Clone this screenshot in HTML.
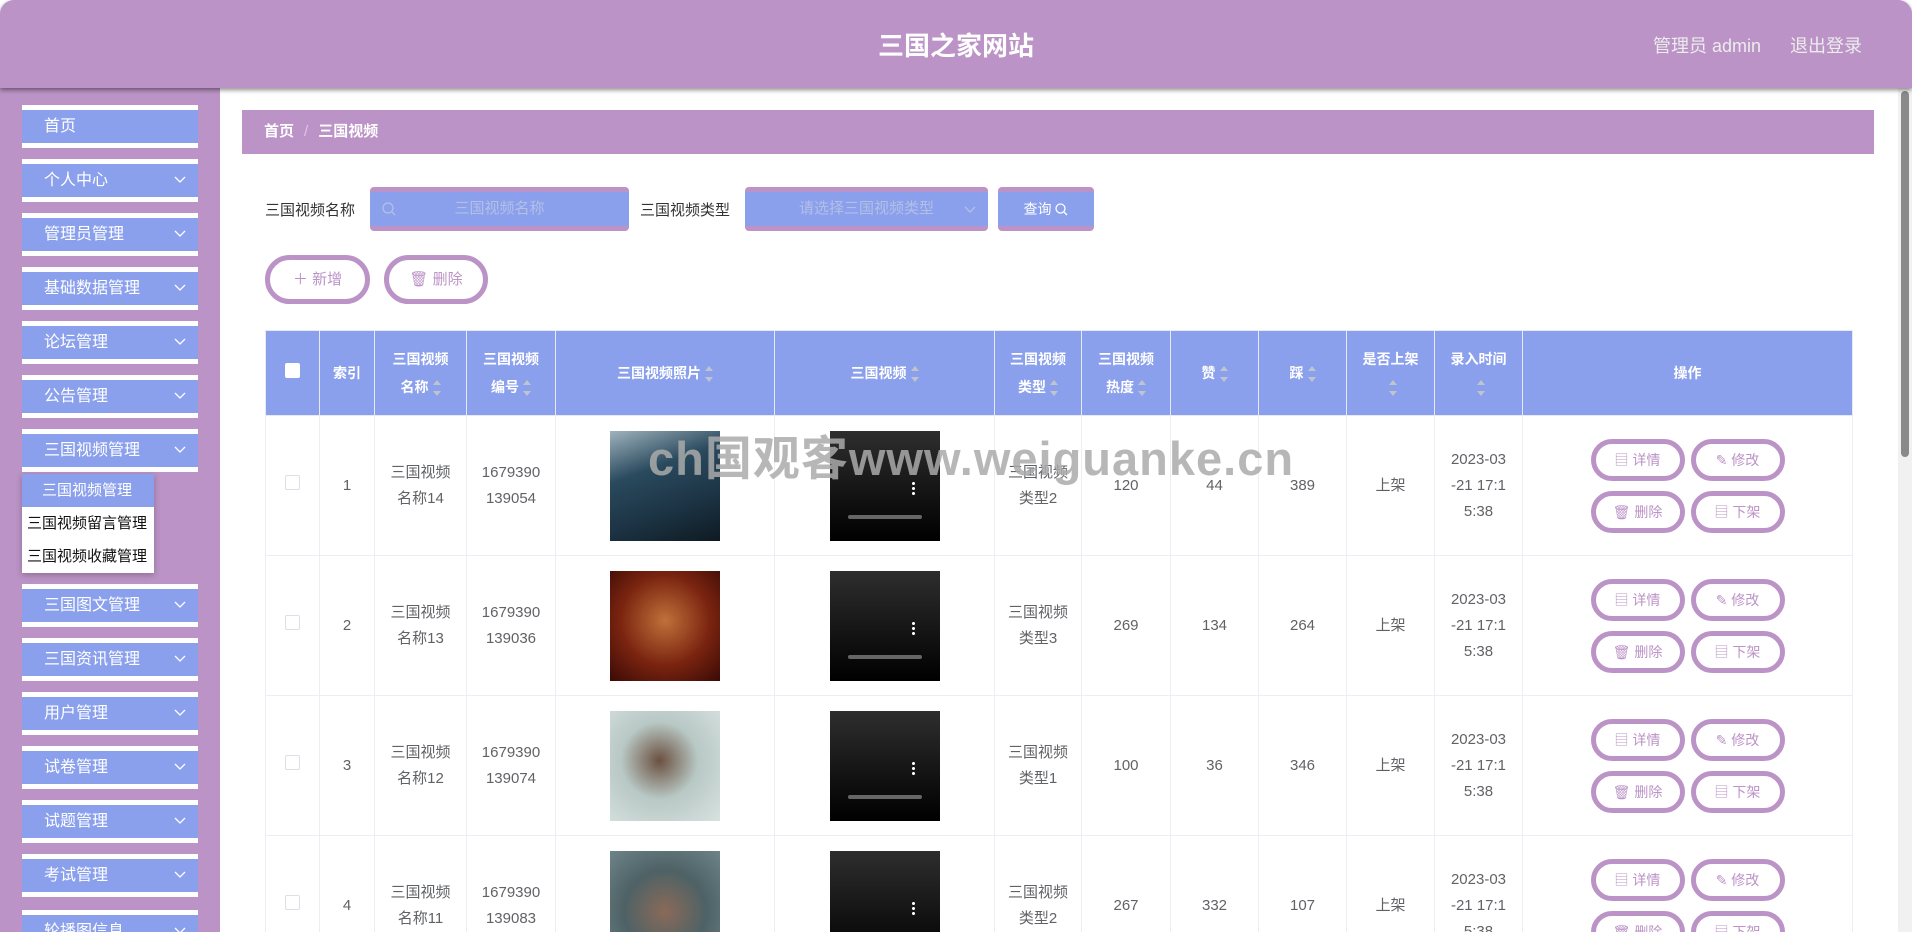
<!DOCTYPE html>
<html><head><meta charset="utf-8"><style>
*{box-sizing:border-box;margin:0;padding:0}
html,body{width:1912px;height:932px;overflow:hidden;background:#fff}
body{font-family:"Liberation Sans","Noto Sans CJK SC",sans-serif}
#w{position:relative;width:1912px;height:932px;overflow:hidden}
.hdr{position:absolute;left:0;top:0;width:1912px;height:88px;background:#bb93c6;border-radius:14px 14px 0 0;box-shadow:0 2px 5px rgba(0,0,0,.45);z-index:3}
.hdr .t{position:absolute;left:0;right:0;top:26px;text-align:center;color:#fff;font-size:26px;font-weight:bold}
.hdr .r{position:absolute;top:32px;color:#ececec;font-size:18px}
.side{position:absolute;left:0;top:88px;width:220px;height:844px;background:#bb93c6}
.mi{position:absolute;left:22px;width:176px;height:43px;background:#8ba0ec;border-top:5px solid #fff;border-bottom:5px solid #fff;color:#fff;font-size:16px;line-height:33px;padding-left:22px}
.mi svg{position:absolute;right:12px;top:12px}
.sub{position:absolute;left:22px;top:474px;width:132px;height:99px;background:#fff;box-shadow:0 2px 6px rgba(0,0,0,.25);font-size:15px}
.sub div{height:33px;line-height:33px;padding-left:5px;color:#111}
.sub div:first-child{background:#8ba0ec;color:#fff;padding-left:20px}
.bc{position:absolute;left:242px;top:110px;width:1632px;height:44px;background:#bb93c6;color:#fff;font-size:15px;font-weight:bold;line-height:44px;padding-left:22px}
.bc span{color:#ddc8e3;margin:0 10px;font-weight:normal}
.lbl{position:absolute;top:199px;font-size:15px;color:#333}
.inp{position:absolute;top:187px;height:44px;background:#8ba0ec;border-top:5px solid #bb93c6;border-bottom:5px solid #bb93c6;border-radius:4px;color:#b4bfe6;font-size:15px;line-height:34px;text-align:center}
.pill{position:absolute;height:49px;border:5px solid #bb93c6;border-radius:25px;background:#fff;color:#bb93c6;font-size:15px;line-height:39px;text-align:center}
table{position:absolute;left:265px;top:330px;border-collapse:collapse;table-layout:fixed;width:1587px}
th{background:#8ba0ec;color:#fff;font-size:14px;font-weight:bold;height:85px;border:1px solid #e8eaf3;line-height:28px;text-align:center}
td{height:140px;border:1px solid #ebeef5;text-align:center;color:#606266;font-size:15px;line-height:26px}
.ar{display:inline-block;vertical-align:middle;width:8px;height:16px;position:relative;margin-left:4px}
.ar:before,.ar:after{content:"";position:absolute;left:0;border-left:4px solid transparent;border-right:4px solid transparent}
.ar:before{top:0;border-bottom:5px solid #c0c4cc}.ar:after{bottom:0;border-top:5px solid #c0c4cc}
.cb{display:inline-block;width:15px;height:15px;border:1px solid #dcdfe6;border-radius:2px;background:#fff}
.img{width:110px;height:110px;margin:auto}
.vid{width:110px;height:110px;margin:auto;background:linear-gradient(#2e2e2e,#000);position:relative}
.vid i{position:absolute;left:18px;right:18px;bottom:22px;height:4px;border-radius:2px;background:#666}
.vid b{position:absolute;right:25px;top:50px;width:3px;height:14px;background:radial-gradient(circle,#fff 1.4px,transparent 1.6px) 0 0/3px 5px}
.ob{display:inline-block;width:94px;height:42px;border:5px solid #bb93c6;border-radius:21px;color:#bb93c6;font-size:14px;line-height:32px;margin:5px 3px}
.wm{position:absolute;left:648px;top:420px;font-size:47px;font-weight:bold;color:rgba(170,170,170,.85);letter-spacing:1px;z-index:2}
.sb{position:absolute;right:0;top:88px;width:14px;height:844px;background:#f1f1f1}
.sb i{position:absolute;left:3px;top:3px;width:8px;height:366px;background:#8a8a8a;border-radius:4px}
</style></head><body><div id="w">
<div class="hdr"><div class="t">三国之家网站</div><div class="r" style="left:1653px">管理员 admin</div><div class="r" style="left:1790px">退出登录</div></div>
<div class="side"></div>
<div class="mi" style="top:105px">首页</div>
<div class="mi" style="top:159px">个人中心<svg width="12" height="8"><path d="M1 1l5 5 5-5" stroke="#fff" fill="none" stroke-width="1.3"/></svg></div>
<div class="mi" style="top:213px">管理员管理<svg width="12" height="8"><path d="M1 1l5 5 5-5" stroke="#fff" fill="none" stroke-width="1.3"/></svg></div>
<div class="mi" style="top:267px">基础数据管理<svg width="12" height="8"><path d="M1 1l5 5 5-5" stroke="#fff" fill="none" stroke-width="1.3"/></svg></div>
<div class="mi" style="top:321px">论坛管理<svg width="12" height="8"><path d="M1 1l5 5 5-5" stroke="#fff" fill="none" stroke-width="1.3"/></svg></div>
<div class="mi" style="top:375px">公告管理<svg width="12" height="8"><path d="M1 1l5 5 5-5" stroke="#fff" fill="none" stroke-width="1.3"/></svg></div>
<div class="mi" style="top:429px">三国视频管理<svg width="12" height="8"><path d="M1 1l5 5 5-5" stroke="#fff" fill="none" stroke-width="1.3"/></svg></div>
<div class="sub"><div>三国视频管理</div><div>三国视频留言管理</div><div>三国视频收藏管理</div></div>
<div class="mi" style="top:584px">三国图文管理<svg width="12" height="8"><path d="M1 1l5 5 5-5" stroke="#fff" fill="none" stroke-width="1.3"/></svg></div>
<div class="mi" style="top:638px">三国资讯管理<svg width="12" height="8"><path d="M1 1l5 5 5-5" stroke="#fff" fill="none" stroke-width="1.3"/></svg></div>
<div class="mi" style="top:692px">用户管理<svg width="12" height="8"><path d="M1 1l5 5 5-5" stroke="#fff" fill="none" stroke-width="1.3"/></svg></div>
<div class="mi" style="top:746px">试卷管理<svg width="12" height="8"><path d="M1 1l5 5 5-5" stroke="#fff" fill="none" stroke-width="1.3"/></svg></div>
<div class="mi" style="top:800px">试题管理<svg width="12" height="8"><path d="M1 1l5 5 5-5" stroke="#fff" fill="none" stroke-width="1.3"/></svg></div>
<div class="mi" style="top:854px">考试管理<svg width="12" height="8"><path d="M1 1l5 5 5-5" stroke="#fff" fill="none" stroke-width="1.3"/></svg></div>
<div class="mi" style="top:910px">轮播图信息<svg width="12" height="8"><path d="M1 1l5 5 5-5" stroke="#fff" fill="none" stroke-width="1.3"/></svg></div>

<div class="bc">首页<span>/</span>三国视频</div>
<div class="lbl" style="left:265px">三国视频名称</div>
<div class="inp" style="left:370px;width:259px"><svg style="position:absolute;left:12px;top:10px" width="14" height="14"><circle cx="6" cy="6" r="5" stroke="#b4bfe6" fill="none" stroke-width="1.3"/><path d="M10 10l3 3" stroke="#b4bfe6" stroke-width="1.3"/></svg>三国视频名称</div>
<div class="lbl" style="left:640px">三国视频类型</div>
<div class="inp" style="left:745px;width:243px">请选择三国视频类型<svg style="position:absolute;right:12px;top:14px" width="12" height="8"><path d="M1 1l5 5 5-5" stroke="#b4bfe6" fill="none" stroke-width="1.3"/></svg></div>
<div class="inp" style="left:998px;width:96px;color:#fff;font-size:14px">查询 <svg width="13" height="13" style="vertical-align:-2px"><circle cx="5.5" cy="5.5" r="4.5" stroke="#fff" fill="none" stroke-width="1.3"/><path d="M9 9l3 3" stroke="#fff" stroke-width="1.3"/></svg></div>
<div class="pill" style="left:265px;top:255px;width:105px">＋ 新增</div>
<div class="pill" style="left:384px;top:255px;width:104px">🗑 删除</div>

<table>
<colgroup><col style="width:54px"><col style="width:55px"><col style="width:92px"><col style="width:89px"><col style="width:219px"><col style="width:220px"><col style="width:87px"><col style="width:89px"><col style="width:88px"><col style="width:88px"><col style="width:88px"><col style="width:88px"><col style="width:330px"></colgroup>
<tr><th><span class="cb" style="border:none"></span></th><th>索引</th><th>三国视频<br>名称<span class="ar"></span></th><th>三国视频<br>编号<span class="ar"></span></th><th>三国视频照片<span class="ar"></span></th><th>三国视频<span class="ar"></span></th><th>三国视频<br>类型<span class="ar"></span></th><th>三国视频<br>热度<span class="ar"></span></th><th>赞<span class="ar"></span></th><th>踩<span class="ar"></span></th><th>是否上架<br><span class="ar"></span></th><th>录入时间<br><span class="ar"></span></th><th>操作</th></tr>
<tr><td><span class="cb"></span></td><td>1</td><td>三国视频<br>名称14</td><td>1679390<br>139054</td><td><div class="img" style="background:linear-gradient(160deg,#9fb3bd,#2a4a5e 35%,#1b3242 70%,#0e1a22)"></div></td><td><div class="vid"><b></b><i></i></div></td><td>三国视频<br>类型2</td><td>120</td><td>44</td><td>389</td><td>上架</td><td>2023-03<br>-21 17:1<br>5:38</td><td><span class="ob">▤ 详情</span><span class="ob">✎ 修改</span><br><span class="ob">🗑 删除</span><span class="ob">▤ 下架</span></td></tr>
<tr><td><span class="cb"></span></td><td>2</td><td>三国视频<br>名称13</td><td>1679390<br>139036</td><td><div class="img" style="background:radial-gradient(circle at 50% 45%,#c0703a,#7a2410 55%,#3a0a05)"></div></td><td><div class="vid"><b></b><i></i></div></td><td>三国视频<br>类型3</td><td>269</td><td>134</td><td>264</td><td>上架</td><td>2023-03<br>-21 17:1<br>5:38</td><td><span class="ob">▤ 详情</span><span class="ob">✎ 修改</span><br><span class="ob">🗑 删除</span><span class="ob">▤ 下架</span></td></tr>
<tr><td><span class="cb"></span></td><td>3</td><td>三国视频<br>名称12</td><td>1679390<br>139074</td><td><div class="img" style="background:radial-gradient(circle at 45% 45%,#6b5040,#b8c8c4 45%,#d8e2e0)"></div></td><td><div class="vid"><b></b><i></i></div></td><td>三国视频<br>类型1</td><td>100</td><td>36</td><td>346</td><td>上架</td><td>2023-03<br>-21 17:1<br>5:38</td><td><span class="ob">▤ 详情</span><span class="ob">✎ 修改</span><br><span class="ob">🗑 删除</span><span class="ob">▤ 下架</span></td></tr>
<tr><td><span class="cb"></span></td><td>4</td><td>三国视频<br>名称11</td><td>1679390<br>139083</td><td><div class="img" style="background:radial-gradient(circle at 50% 55%,#8a6a58,#4e6266 50%,#6e8488)"></div></td><td><div class="vid"><b></b><i></i></div></td><td>三国视频<br>类型2</td><td>267</td><td>332</td><td>107</td><td>上架</td><td>2023-03<br>-21 17:1<br>5:38</td><td><span class="ob">▤ 详情</span><span class="ob">✎ 修改</span><br><span class="ob">🗑 删除</span><span class="ob">▤ 下架</span></td></tr>
</table>
<div class="wm">ch国观客www.weiguanke.cn</div>
<div class="sb"><i></i></div>
</div></body></html>
